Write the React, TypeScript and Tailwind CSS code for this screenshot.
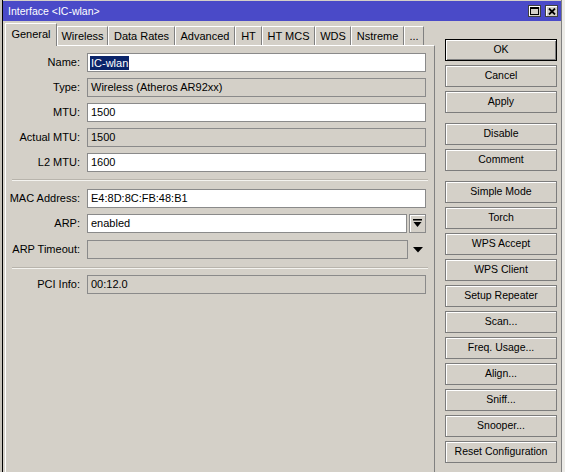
const tabs = [
    { label: 'General', w: 'w-[52px]', active: true },
    { label: 'Wireless', w: 'w-[51px]' },
    { label: 'Data Rates', w: 'w-[67px]' },
    { label: 'Advanced', w: 'w-[60px]' },
    { label: 'HT', w: 'w-[27px]' },
    { label: 'HT MCS', w: 'w-[53px]' },
    { label: 'WDS', w: 'w-[36px]' },
    { label: 'Nstreme', w: 'w-[53px]' },
    { label: '...', w: 'w-[20px]' },
];

const buttonGroups = [
    ['OK', 'Cancel', 'Apply'],
    ['Disable', 'Comment'],
    [
        'Simple Mode',
        'Torch',
        'WPS Accept',
        'WPS Client',
        'Setup Repeater',
        'Scan...',
        'Freq. Usage...',
        'Align...',
        'Sniff...',
        'Snooper...',
        'Reset Configuration',
    ],
];

function Label({ children }: { children: string }) {
    return <span className="w-[75px] shrink-0 text-right pr-[1px] text-[11px] text-black">{children}</span>;
}

function Field({ label, value, readOnly, selected }: { label: string; value: string; readOnly?: boolean; selected?: boolean }) {
    return (
        <div className="flex items-center gap-[6px] h-[19px]">
            <Label>{label}</Label>
            <div
                className={`w-[339px] h-[19px] flex items-center pl-[2px] border border-[#8a8a8a] text-[11px] text-black ${
                    readOnly ? 'bg-[#d4d0c8]' : 'bg-white'
                }`}
            >
                {selected ? <span className="bg-[#0a246a] text-white px-[1px] leading-[14px]">{value}</span> : <span className="px-[1px]">{value}</span>}
            </div>
        </div>
    );
}

function Separator() {
    return (
        <div className="ml-[6px] w-[416px] flex flex-col">
            <div className="h-px bg-[#b8b4ac]" />
            <div className="h-px bg-[#f4f3ef]" />
        </div>
    );
}

function WinButton({ label, isDefault }: { label: string; isDefault?: boolean }) {
    return (
        <button
            className={`w-[112px] h-[22px] flex items-center justify-center bg-[#d4d0c8] text-[10.5px] text-black border ${
                isDefault ? 'border-black shadow-[inset_1px_1px_0_#fff,inset_-1px_-1px_0_#808080]' : 'border-[#7c7c7c] shadow-[inset_1px_1px_0_#fff]'
            }`}
        >
            {label}
        </button>
    );
}

export default function App() {
    return (
        <div className="w-[565px] h-[472px] overflow-hidden flex bg-[#d4d0c8]" style={{ fontFamily: '"Liberation Sans", Arial, sans-serif' }}>
            <div className="w-[2px] shrink-0 bg-[#c8c4bc]" />
            <div className="w-[560px] shrink-0 h-full flex flex-col border-l border-r border-l-black border-r-[#808080] pt-px">
                {/* Title bar */}
                <div className="h-[20px] bg-[#4a4ac8] flex items-center justify-between pl-[5px] pr-[3px]">
                    <span className="text-white text-[10.5px] leading-none">Interface &lt;IC-wlan&gt;</span>
                    <div className="flex items-center gap-[4px]">
                        <div className="w-[13px] h-[12px] bg-[#d4d0c8] border border-[#404040] shadow-[inset_1px_1px_0_#fff] flex items-center justify-center">
                            <svg width="9" height="8" viewBox="0 0 9 8">
                                <rect x="0.5" y="0.5" width="8" height="7" fill="none" stroke="#000" />
                                <rect x="0" y="0" width="9" height="2" fill="#000" />
                            </svg>
                        </div>
                        <div className="w-[13px] h-[12px] bg-[#d4d0c8] border border-[#404040] shadow-[inset_1px_1px_0_#fff] flex items-center justify-center">
                            <svg width="8" height="7" viewBox="0 0 8 7">
                                <path d="M1 0.5 L7 6.5 M7 0.5 L1 6.5" stroke="#000" strokeWidth="1.8" />
                            </svg>
                        </div>
                    </div>
                </div>

                <div className="flex pl-[2px] pt-[2px] gap-[10px] flex-1">
                    {/* Tabs + panel */}
                    <div className="w-[430px] flex flex-col">
                        <div className="flex items-end h-[22px]">
                            {tabs.map((t) =>
                                t.active ? (
                                    <div
                                        key={t.label}
                                        className={`${t.w} h-[23px] -mb-px relative z-10 bg-[#d4d0c8] border-l border-t border-white border-r border-r-[#808080] flex items-center justify-center text-[11px] text-black pb-[2px]`}
                                    >
                                        {t.label}
                                    </div>
                                ) : (
                                    <div
                                        key={t.label}
                                        className={`${t.w} h-[19px] bg-[#d4d0c8] border-l border-t border-white border-r border-r-[#808080] flex items-center justify-center text-[11px] text-black`}
                                    >
                                        {t.label}
                                    </div>
                                )
                            )}
                        </div>
                        <div className="flex-1 border-t border-l border-white border-r border-r-[#808080] pt-[7px] flex flex-col">
                            <div className="flex flex-col gap-[6px]">
                                <Field label="Name:" value="IC-wlan" selected />
                                <Field label="Type:" value="Wireless (Atheros AR92xx)" readOnly />
                                <Field label="MTU:" value="1500" />
                                <Field label="Actual MTU:" value="1500" readOnly />
                                <Field label="L2 MTU:" value="1600" />
                            </div>
                            <div className="mt-[7px] mb-[8px]">
                                <Separator />
                            </div>
                            <div className="flex flex-col gap-[6px]">
                                <Field label="MAC Address:" value="E4:8D:8C:FB:48:B1" />
                                <div className="flex items-center gap-[6px] h-[19px]">
                                    <Label>ARP:</Label>
                                    <div className="w-[320px] h-[19px] flex items-center pl-[3px] border border-[#8a8a8a] bg-white text-[11px] text-black">enabled</div>
                                    <div className="ml-[-4px] w-[17px] h-[19px] bg-[#d4d0c8] border border-[#8a8a8a] shadow-[inset_1px_1px_0_#fff] flex items-center justify-center">
                                        <svg width="9" height="9" viewBox="0 0 9 9">
                                            <rect x="0" y="0" width="9" height="1.5" fill="#000" />
                                            <path d="M0.5 3 H8.5 L4.5 8 Z" fill="#000" />
                                        </svg>
                                    </div>
                                </div>
                                <div className="flex items-center gap-[6px] h-[19px] mt-px">
                                    <Label>ARP Timeout:</Label>
                                    <div className="w-[321px] h-[19px] border border-[#8a8a8a] bg-[#d4d0c8]" />
                                    <svg width="10" height="6" viewBox="0 0 10 6" className="ml-[-1px]">
                                        <path d="M0 0 H10 L5 5.5 Z" fill="#000" />
                                    </svg>
                                </div>
                            </div>
                            <div className="mt-[8px] mb-[6px]">
                                <Separator />
                            </div>
                            <Field label="PCI Info:" value="00:12.0" readOnly />
                        </div>
                    </div>

                    {/* Buttons */}
                    <div className="w-[112px] flex flex-col pt-[16px] gap-[10px]">
                        {buttonGroups.map((group, gi) => (
                            <div key={gi} className="flex flex-col gap-[4px]">
                                {group.map((b) => (
                                    <WinButton key={b} label={b} isDefault={b === 'OK'} />
                                ))}
                            </div>
                        ))}
                    </div>
                </div>
            </div>
            <div className="flex-1 bg-[#ecebe7]" />
        </div>
    );
}
